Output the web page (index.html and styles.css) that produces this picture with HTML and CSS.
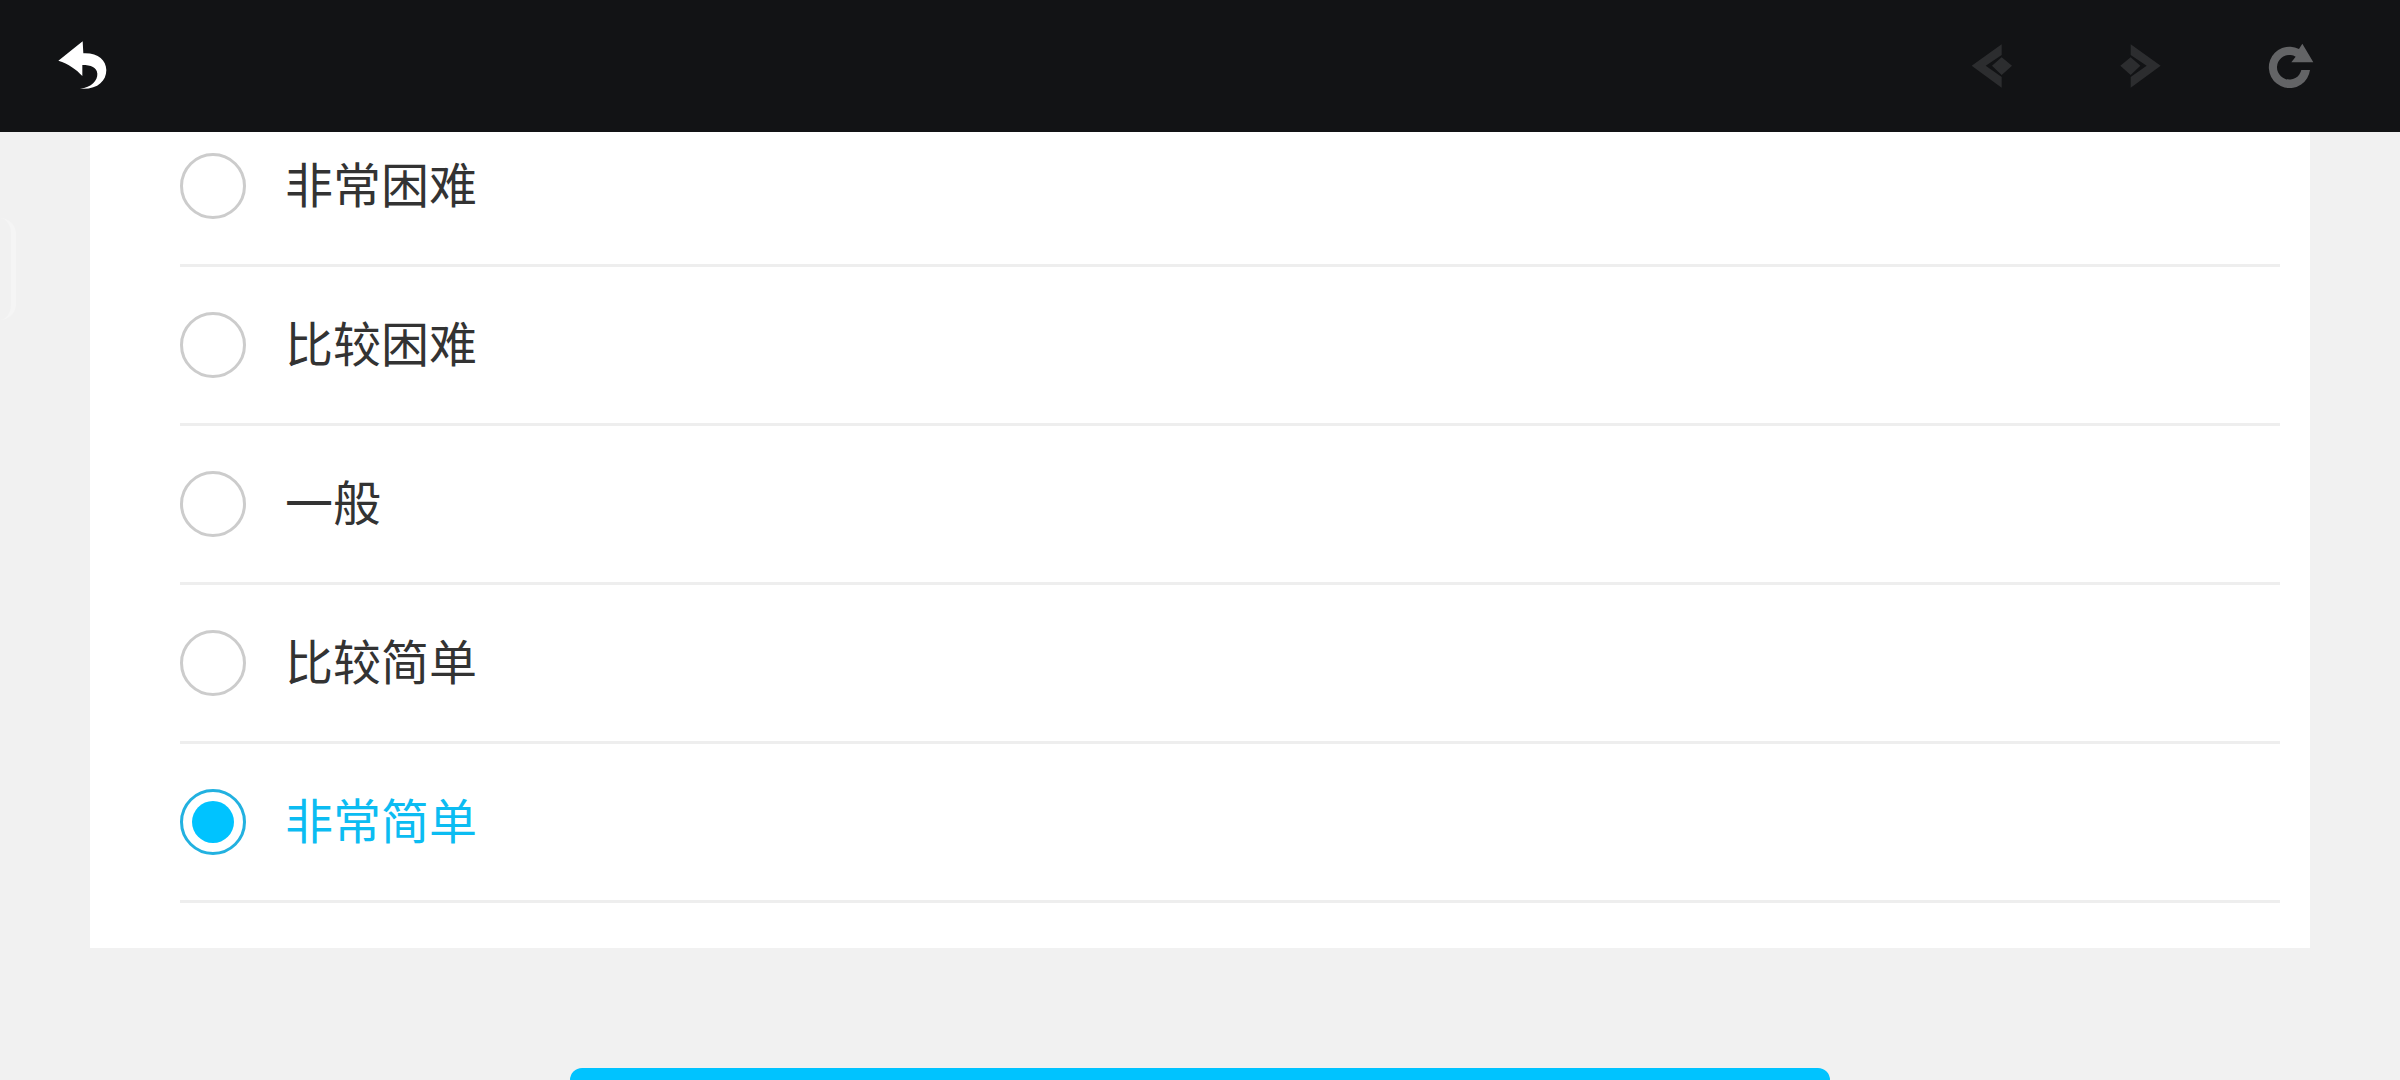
FILE: index.html
```html
<!DOCTYPE html>
<html lang="zh-CN">
<head>
    <meta charset="UTF-8">
    <meta name="viewport" content="width=device-width, initial-scale=1.0">
    <title>问卷</title>
    <link rel="stylesheet" href="styles.css">
</head>
<body>
    <header class="toolbar">
        <button class="tool back" type="button" aria-label="返回">
            <svg viewBox="0 0 300 270"><path d="M55 119L128 61C129 73 129 85 130 97C174 95 198 117 199 147C199 181 171 207 120 203C155 199 173 178 172 158C171 139 153 132 127 132V165C109 145 86 129 55 119Z"/></svg>
        </button>
        <nav class="tools">
            <button class="tool dim" type="button" aria-label="后退">
                <svg viewBox="0 0 300 270"><path d="M65 134L155 70V102L107 134L155 168V200ZM155 109L186 134L155 162L126 134Z"/></svg>
            </button>
            <button class="tool dim" type="button" aria-label="前进">
                <svg viewBox="0 0 300 270"><path d="M182 134L92 70V102L140 134L92 168V200ZM92 109L61 134L92 162L121 134Z"/></svg>
            </button>
            <button class="tool refresh" type="button" aria-label="刷新">
                <svg viewBox="0 0 300 270"><path d="M157 68L190 124H124L137 107A37 37 0 1 0 154 147H180A62 62 0 1 1 147 84Z"/></svg>
            </button>
        </nav>
    </header>

    <div class="handle"></div>

    <form class="survey">
        <div class="card">
            <label class="option"><input type="radio" name="level"><span>非常困难</span></label>
            <label class="option"><input type="radio" name="level"><span>比较困难</span></label>
            <label class="option"><input type="radio" name="level"><span>一般</span></label>
            <label class="option"><input type="radio" name="level"><span>比较简单</span></label>
            <label class="option"><input type="radio" name="level" checked><span>非常简单</span></label>
        </div>
        <button class="submit" type="button" aria-label="提交"></button>
    </form>
</body>
</html>
```

FILE: styles.css
```css
* {
    box-sizing: border-box;
}

body {
    margin: 0;
    height: 100vh;
    overflow: hidden;
    background: #f1f1f1;
    font-family: "Noto Sans CJK SC", sans-serif;
    color: #333;
}

.toolbar {
    display: flex;
    justify-content: space-between;
    align-items: center;
    height: 132px;
    padding: 0 50px 0 40px;
    background: #121315;
}

.tools {
    display: flex;
    gap: 50px;
}

.tool {
    width: 100px;
    height: 90px;
    padding: 0;
    border: 0;
    background: none;
    cursor: pointer;
}

.tool svg {
    display: block;
    width: 100%;
    height: 100%;
}

.back {
    fill: #fff;
}

.dim {
    fill: #2c2d2f;
}

.refresh {
    fill: #636466;
}

/* edge tab of the side panel */
.handle {
    position: absolute;
    left: 0;
    top: 218px;
    width: 16px;
    height: 102px;
    border: 5px solid #f5f5f5;
    border-width: 0 5px 0 0;
    border-radius: 0 16px 16px 0;
}

.survey {
    padding: 0 90px;
}

.card {
    padding: 0 30px 45px 90px;
    background: #fff;
}

.option {
    display: flex;
    align-items: center;
    gap: 39px;
    padding: 45px 0;
    border-bottom: 3px solid #eee;
    font-size: 48px;
    line-height: 58px;
    cursor: pointer;
}

.option:first-child {
    padding-top: 21px;
}

.option span {
    padding-bottom: 8px;
}

.option input {
    appearance: none;
    width: 66px;
    height: 66px;
    margin: 0;
    padding: 9px;
    border: 3px solid #ccc;
    border-radius: 50%;
}

.option input:checked {
    border-color: #22b1e0;
    background: #00c3ff content-box;
}

.option input:checked + span {
    color: #0bbcf2;
}

.submit {
    display: block;
    width: 1260px;
    max-width: 100%;
    height: 132px;
    margin: 120px auto 0;
    border: 0;
    border-radius: 12px;
    background: #00c3ff;
}
```
